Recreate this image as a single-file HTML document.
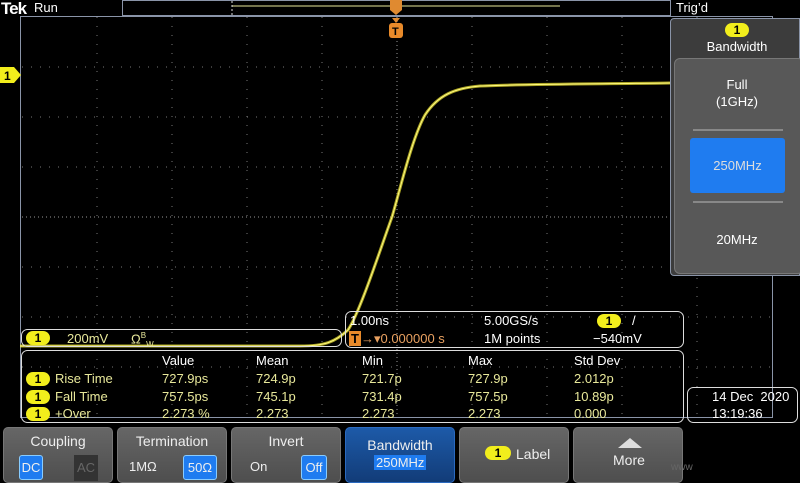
<!DOCTYPE html><html><head><style>
*{margin:0;padding:0;box-sizing:border-box}
body{width:800px;height:480px;background:#000;position:relative;overflow:hidden;font-family:"Liberation Sans","DejaVu Sans",sans-serif;color:#fff}
.a{position:absolute}
.t{font-size:13px;white-space:nowrap}
.y{color:#e8e89a}
.pill{position:absolute;background:#f2ee1c;color:#000;border-radius:8px;width:24px;height:14px;font-size:12px;text-align:center;line-height:14px;font-weight:bold}
.btn{position:absolute;top:427px;height:56px;width:110px;border-radius:5px;background:linear-gradient(#666,#4e4e4e);border:1px solid #777}
.bt{position:absolute;width:100%;text-align:center;top:5px;font-size:14px;color:#eee}
.sel{position:absolute;background:#1f7cf0;border:1px solid #8cf;border-radius:3px;color:#eee;font-size:13px;text-align:center}
</style></head><body>
<svg class="a" style="left:0;top:0" width="800" height="480">
<g stroke="#777" stroke-width="1" stroke-dasharray="1 8">
<line x1="97" y1="17" x2="97" y2="417"/><line x1="172" y1="17" x2="172" y2="417"/><line x1="247" y1="17" x2="247" y2="417"/><line x1="322" y1="17" x2="322" y2="417"/><line x1="472" y1="17" x2="472" y2="417"/><line x1="547" y1="17" x2="547" y2="417"/><line x1="622" y1="17" x2="622" y2="417"/><line x1="697" y1="17" x2="697" y2="417"/>
<line x1="22" y1="67" x2="772" y2="67"/><line x1="22" y1="117" x2="772" y2="117"/><line x1="22" y1="167" x2="772" y2="167"/><line x1="22" y1="267" x2="772" y2="267"/><line x1="22" y1="317" x2="772" y2="317"/><line x1="22" y1="367" x2="772" y2="367"/>
</g>
<g stroke="#999" stroke-width="1" stroke-dasharray="1 3">
<line x1="397" y1="17" x2="397" y2="417"/><line x1="22" y1="217" x2="772" y2="217"/></g>
<rect x="20.5" y="16.5" width="752" height="401" fill="none" stroke="#8a94a8"/>
<rect x="122.5" y="0.5" width="548" height="15" fill="#000" stroke="#8a94a8"/>
<line x1="232" y1="6" x2="560" y2="6" stroke="#e8e89a"/>
<line x1="232" y1="1" x2="232" y2="15" stroke="#ddd" stroke-dasharray="2 2"/>
<path d="M20 346 L300 346 C325 346 335 342 348 330 C360 312 380 250 392 217 C400 190 412 138 425 115 C438 95 455 88 480 86 C520 84 600 84 670 83" fill="none" stroke="#d8d030" stroke-width="3" opacity="0.8"/>
<path d="M20 346 L300 346 C325 346 335 342 348 330 C360 312 380 250 392 217 C400 190 412 138 425 115 C438 95 455 88 480 86 C520 84 600 84 670 83" fill="none" stroke="#fffa80" stroke-width="1"/>
<path d="M0 67 L14 67 L21 75 L14 83 L0 83Z" fill="#f2ee1c"/>
<text x="4" y="80" font-size="12" font-weight="bold" font-family="Liberation Sans">1</text>
<path d="M390 0 h12 v10 l-6 5 l-6 -5z" fill="#e08a30"/>
<rect x="389" y="23" width="14" height="15" rx="3" fill="#e88a2a"/>
<path d="M392 18 h8 l-4 5z" fill="#e08a30"/>
<text x="392" y="35" font-size="11" font-weight="bold" fill="#000" font-family="Liberation Sans">T</text>
<rect x="21.5" y="329.5" width="320" height="17" rx="6" fill="none" stroke="#ddd"/>
<rect x="345.5" y="311.5" width="338" height="36" rx="6" fill="none" stroke="#ddd"/>
<rect x="21.5" y="350.5" width="662" height="72" rx="6" fill="none" stroke="#ddd"/>
<rect x="687.5" y="387.5" width="110" height="35" rx="6" fill="none" stroke="#ddd"/>
</svg>
<div class="a t" style="left:1px;top:-1px;font-size:17px;font-weight:bold;letter-spacing:-1px">Tek</div>
<div class="a t" style="left:34px;top:0px">Run</div>
<div class="a t" style="left:676px;top:0px">Trig’d</div>
<div class="pill" style="left:26px;top:331px">1</div>
<div class="a t y" style="left:67px;top:331px">200mV</div>
<div class="a t y" style="left:131px;top:331px">Ω<sup style="font-size:8px">B</sup><sub style="font-size:8px">W</sub></div>
<div class="a t" style="left:350px;top:313px">1.00ns</div>
<div class="a t" style="left:484px;top:313px">5.00GS/s</div>
<div class="pill" style="left:597px;top:314px">1</div>
<div class="a t" style="left:632px;top:313px">/</div>
<div class="a t" style="left:349px;top:331px;color:#e8a060"><span style="background:#e88a2a;color:#000;font-weight:bold;padding:0 2px">T</span>→▾0.000000 s</div>
<div class="a t" style="left:484px;top:331px">1M points</div>
<div class="a t" style="left:593px;top:331px">−540mV</div>
<div class="a t" style="left:162px;top:353px">Value</div><div class="a t" style="left:256px;top:353px">Mean</div><div class="a t" style="left:362px;top:353px">Min</div><div class="a t" style="left:468px;top:353px">Max</div><div class="a t" style="left:574px;top:353px">Std Dev</div>
<div class="pill" style="left:26px;top:372px">1</div><div class="a t y" style="left:55px;top:371px">Rise Time</div>
<div class="a t y" style="left:162px;top:371px">727.9ps</div><div class="a t y" style="left:256px;top:371px">724.9p</div><div class="a t y" style="left:362px;top:371px">721.7p</div><div class="a t y" style="left:468px;top:371px">727.9p</div><div class="a t y" style="left:574px;top:371px">2.012p</div>
<div class="pill" style="left:26px;top:390px">1</div><div class="a t y" style="left:55px;top:389px">Fall Time</div>
<div class="a t y" style="left:162px;top:389px">757.5ps</div><div class="a t y" style="left:256px;top:389px">745.1p</div><div class="a t y" style="left:362px;top:389px">731.4p</div><div class="a t y" style="left:468px;top:389px">757.5p</div><div class="a t y" style="left:574px;top:389px">10.89p</div>
<div class="pill" style="left:26px;top:407px">1</div><div class="a t y" style="left:55px;top:406px">+Over</div>
<div class="a t y" style="left:162px;top:406px">2.273 %</div><div class="a t y" style="left:256px;top:406px">2.273</div><div class="a t y" style="left:362px;top:406px">2.273</div><div class="a t y" style="left:468px;top:406px">2.273</div><div class="a t y" style="left:574px;top:406px">0.000</div>
<div class="a t" style="left:712px;top:389px">14 Dec&nbsp; 2020</div>
<div class="a t" style="left:712px;top:406px">13:19:36</div>
<!-- side menu -->
<div class="a" style="left:670px;top:18px;width:130px;height:258px;background:#3c3c3c;border:1px solid #8a94a8;border-radius:4px 0 0 4px"></div>
<div class="pill" style="left:725px;top:23px">1</div>
<div class="a t" style="left:670px;top:39px;width:134px;text-align:center">Bandwidth</div>
<div class="a" style="left:674px;top:58px;width:130px;height:216px;background:#585858;border-radius:6px;border:1px solid #777"></div>
<div class="a" style="left:670px;top:76px;width:134px;text-align:center;font-size:13px;line-height:17px">Full<br>(1GHz)</div>
<div class="a" style="left:693px;top:129px;width:90px;height:2px;background:#888"></div>
<div class="a" style="left:690px;top:138px;width:95px;height:55px;background:#1f7cf0;border-radius:3px;text-align:center;line-height:55px;font-size:13px;color:#ddd">250MHz</div>
<div class="a" style="left:693px;top:201px;width:90px;height:2px;background:#888"></div>
<div class="a t" style="left:670px;top:232px;width:134px;text-align:center">20MHz</div>
<!-- buttons -->
<div class="btn" style="left:3px"><div class="bt">Coupling</div><div class="sel" style="left:15px;top:27px;width:24px;height:25px;line-height:23px">DC</div><div class="a" style="left:70px;top:27px;width:24px;height:26px;background:#333;color:#666;font-size:13px;text-align:center;line-height:26px">AC</div></div>
<div class="btn" style="left:117px"><div class="bt">Termination</div><div class="a t" style="left:11px;top:31px;color:#eee">1MΩ</div><div class="sel" style="left:65px;top:27px;width:34px;height:25px;line-height:23px">50Ω</div></div>
<div class="btn" style="left:231px"><div class="bt">Invert</div><div class="a t" style="left:18px;top:31px;color:#eee">On</div><div class="sel" style="left:69px;top:27px;width:26px;height:25px;line-height:23px">Off</div></div>
<div class="btn" style="left:345px;background:linear-gradient(#1d5aa8,#123c78);border-color:#2a6ac0"><div class="bt" style="top:9px">Bandwidth</div><div class="a" style="left:28px;top:27px;background:#1f7cf0;padding:0 2px;font-size:13px;color:#eee">250MHz</div></div>
<div class="btn" style="left:459px"><div class="pill" style="left:25px;top:18px;width:26px">1</div><div class="a t" style="left:56px;top:18px;font-size:14px;color:#eee">Label</div></div>
<div class="btn" style="left:573px"><div class="a" style="left:44px;top:10px;width:0;height:0;border-left:12px solid transparent;border-right:12px solid transparent;border-bottom:10px solid #ddd"></div><div class="a t" style="left:39px;top:24px;font-size:14px;color:#eee">More</div></div>
<div class="a" style="left:671px;top:462px;font-size:10px;color:#666">www</div>
</body></html>
